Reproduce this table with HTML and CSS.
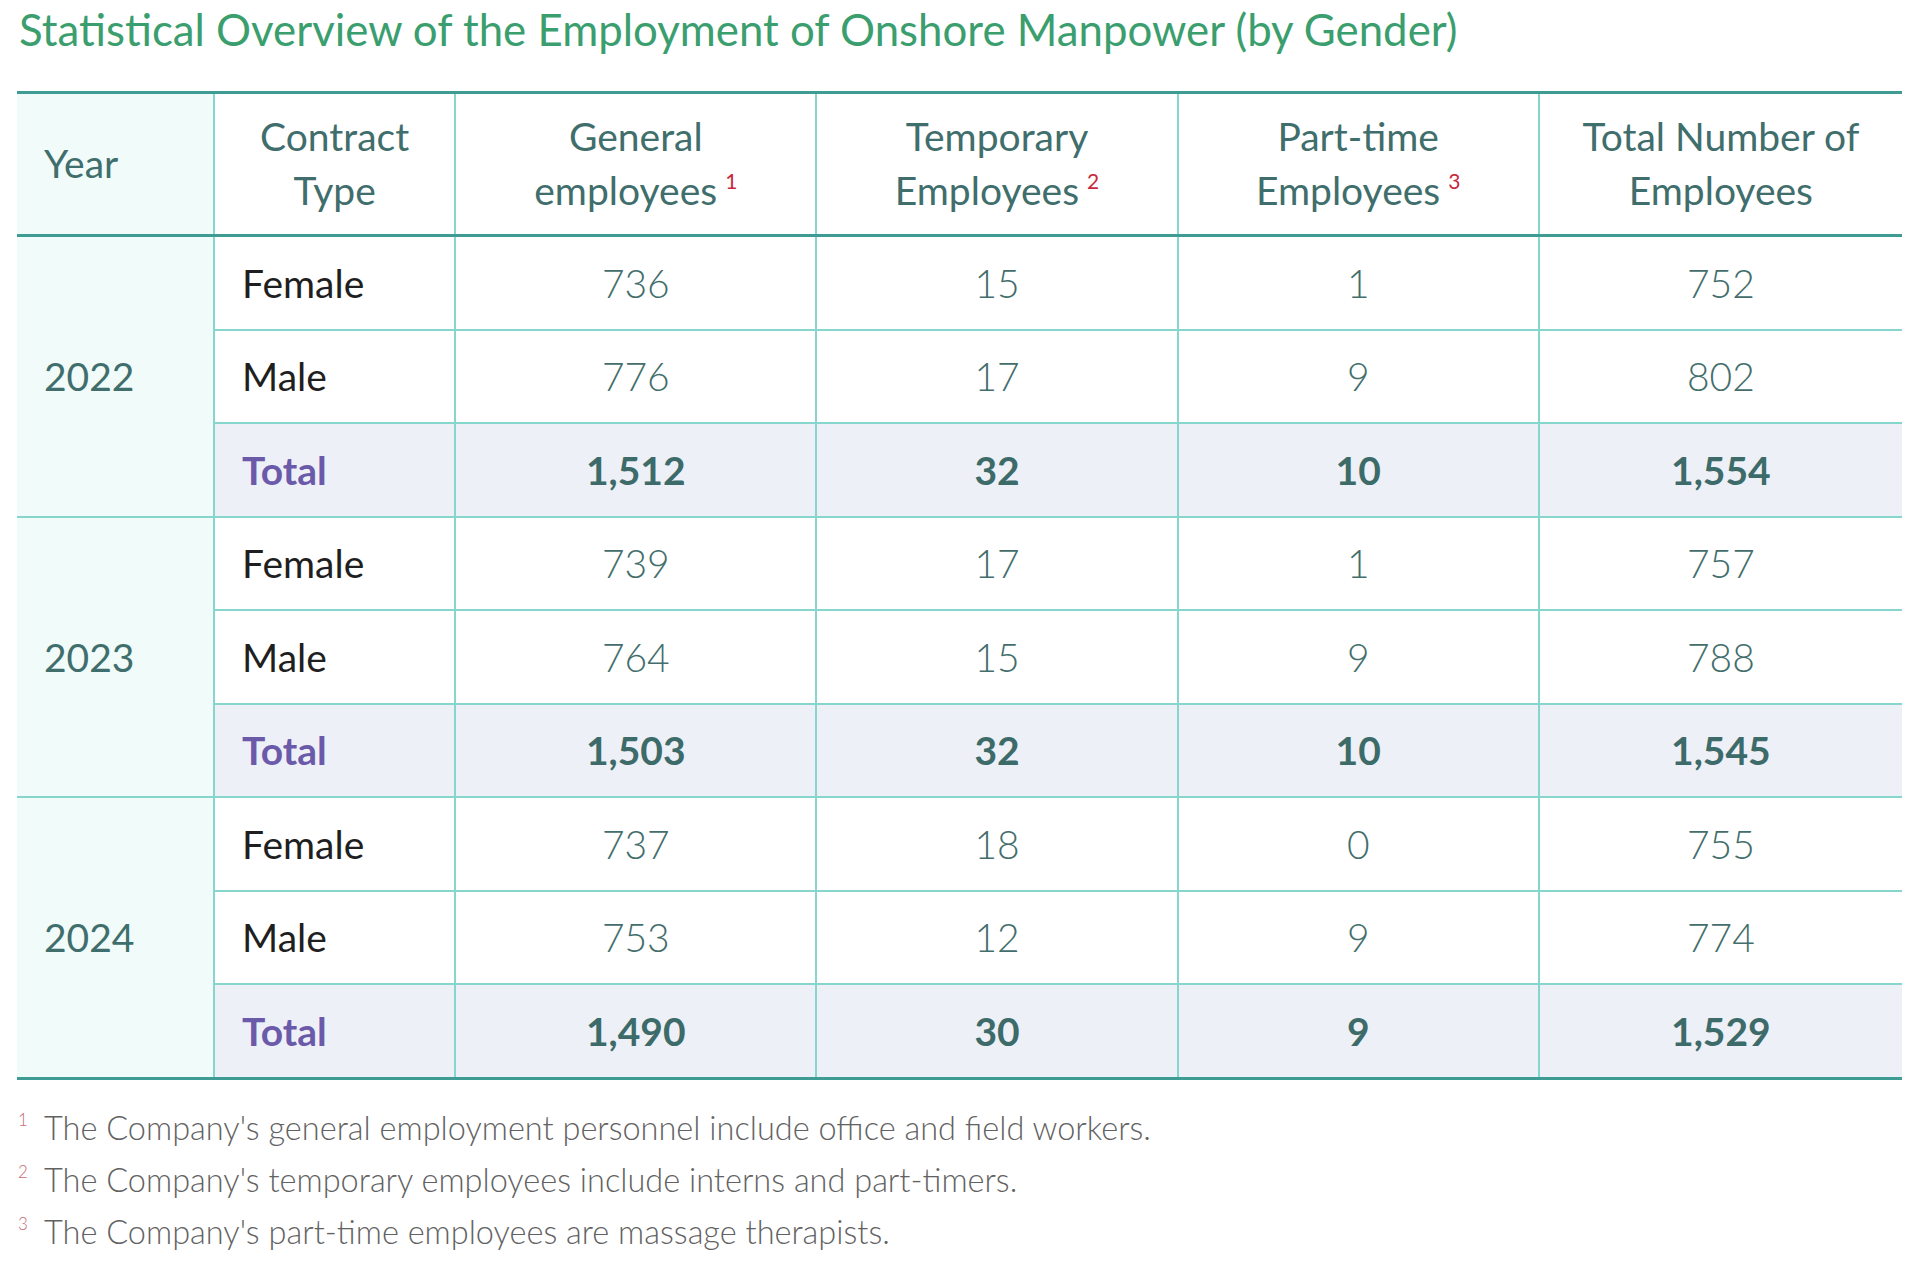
FILE: index.html
```html
<!DOCTYPE html>
<html lang="en">
<head>
<meta charset="utf-8">
<title>Statistical Overview of the Employment of Onshore Manpower (by Gender)</title>
<link rel="stylesheet" href="styles.css">
</head>
<body>
<div class="page">
  <h1 class="title">Statistical Overview of the Employment of Onshore Manpower (by Gender)</h1>
  <table class="stats">
    <colgroup>
      <col class="c-year"><col class="c-type"><col class="c-num"><col class="c-num"><col class="c-num"><col class="c-tot">
    </colgroup>
    <thead>
      <tr>
        <th class="year-head">Year</th>
        <th>Contract<br>Type</th>
        <th>General<br>employees<sup class="mark">1</sup></th>
        <th>Temporary<br>Employees<sup class="mark">2</sup></th>
        <th>Part-time<br>Employees<sup class="mark">3</sup></th>
        <th>Total Number of<br>Employees</th>
      </tr>
    </thead>
    <tbody>
      <tr class="group-start">
        <td class="year" rowspan="3">2022</td>
        <td class="type">Female</td><td>736</td><td>15</td><td>1</td><td>752</td>
      </tr>
      <tr>
        <td class="type">Male</td><td>776</td><td>17</td><td>9</td><td>802</td>
      </tr>
      <tr class="total">
        <td class="type">Total</td><td>1,512</td><td>32</td><td>10</td><td>1,554</td>
      </tr>
      <tr class="group-start">
        <td class="year" rowspan="3">2023</td>
        <td class="type">Female</td><td>739</td><td>17</td><td>1</td><td>757</td>
      </tr>
      <tr>
        <td class="type">Male</td><td>764</td><td>15</td><td>9</td><td>788</td>
      </tr>
      <tr class="total">
        <td class="type">Total</td><td>1,503</td><td>32</td><td>10</td><td>1,545</td>
      </tr>
      <tr class="group-start">
        <td class="year" rowspan="3">2024</td>
        <td class="type">Female</td><td>737</td><td>18</td><td>0</td><td>755</td>
      </tr>
      <tr>
        <td class="type">Male</td><td>753</td><td>12</td><td>9</td><td>774</td>
      </tr>
      <tr class="total last">
        <td class="type">Total</td><td>1,490</td><td>30</td><td>9</td><td>1,529</td>
      </tr>
    </tbody>
  </table>
  <div class="notes">
    <p class="note"><span class="nmark">1</span>The Company's general employment personnel include office and field workers.</p>
    <p class="note"><span class="nmark">2</span>The Company's temporary employees include interns and part-timers.</p>
    <p class="note"><span class="nmark">3</span>The Company's part-time employees are massage therapists.</p>
  </div>
</div>
</body>
</html>
```
FILE: styles.css
```css
html, body {
  margin: 0;
  padding: 0;
  background: #ffffff;
}
body {
  font-family: Lato, "Noto Sans", sans-serif;
}
.page {
  padding: 0 18px 0 17px;
}
.title {
  margin: 0;
  padding: 4px 0 0 2px;
  height: 91px;
  box-sizing: border-box;
  font-size: 43.8px;
  line-height: 50px;
  font-weight: 400;
  color: #3b9e6e;
  letter-spacing: 0;
}
.stats {
  width: 1885px;
  table-layout: fixed;
  border-collapse: collapse;
  border-top: 3px solid #3f9c94;
  border-bottom: 3px solid #3f9c94;
}
.c-year { width: 197px; }
.c-type { width: 241px; }
.c-num { width: 361px; }
.c-tot { width: 363px; }

.stats th {
  height: 138px;
  padding: 0 0 2px 0;
  font-size: 39px;
  line-height: 54px;
  font-weight: 400;
  color: #3f6e6c;
  text-align: center;
  border-left: 2px solid #86d6cd;
  border-bottom: 3px solid #3f9c94;
}
.stats th.year-head {
  text-align: left;
  padding-left: 27px;
  border-left: none;
  background: #f0fbfa;
}
.mark {
  font-size: 21px;
  color: #c8283c;
  vertical-align: 0;
  position: relative;
  top: -16px;
  margin-left: 8px;
  line-height: 0;
}
.stats td {
  height: 91.5px;
  padding: 0;
  font-size: 39px;
  font-weight: 300;
  color: #436e6c;
  text-align: center;
  border: 2px solid #86d6cd;
  border-right: none;
}
.stats td.year {
  text-align: left;
  padding-left: 27px;
  border-left: none;
  background: #f0fbfa;
  color: #3f6e6c;
  font-weight: 400;
}
.stats td.type {
  text-align: left;
  padding-left: 27px;
  color: #1f1f1f;
  font-weight: 400;
}
.stats tr.total td {
  background: #eef0f7;
  font-weight: 700;
  color: #3c6b69;
}
.stats tr.total td.type {
  color: #6b5aa9;
}
.stats tr.last td {
  border-bottom: 3px solid #3f9c94;
}
.notes {
  padding-top: 26px;
}
.note {
  margin: 0;
  height: 52px;
  font-size: 32.5px;
  line-height: 44px;
  color: #626262;
  font-weight: 300;
}
.nmark {
  display: inline-block;
  width: 26px;
  padding-left: 1px;
  font-size: 17px;
  color: #c56b78;
  vertical-align: 14px;
  line-height: 0;
}
```
